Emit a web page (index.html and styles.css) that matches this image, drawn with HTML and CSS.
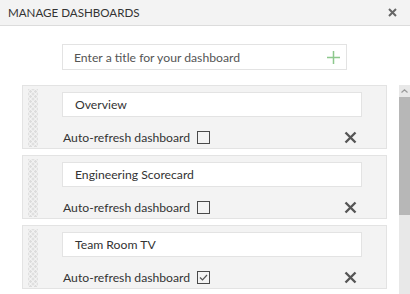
FILE: index.html
```html
<!DOCTYPE html>
<html lang="en">
<head>
  <meta charset="UTF-8" />
  <title>Manage dashboards</title>
  <link rel="stylesheet" href="styles.css">
</head>
<body>
  <div class="panel">
    <div class="header">
      <span class="title">MANAGE DASHBOARDS</span>
      <svg class="close" width="9" height="9" viewBox="0 0 9 9"><path d="M1 1L8 8M8 1L1 8" stroke="#666" stroke-width="2"/></svg>
    </div>
    <div class="new-row">
      <div class="new-box">
        <span class="placeholder">Enter a title for your dashboard</span>
        <svg width="13" height="13" viewBox="0 0 13 13"><path d="M6.5 0V13M0 6.5H13" stroke="#8dc88d" stroke-width="1.5"/></svg>
      </div>
    </div>
    <div class="list-area">
      <div class="list">
        <div class="card">
          <div class="grip"></div>
          <div class="card-body">
            <div class="name">Overview</div>
            <div class="opts">
              <span class="lbl">Auto-refresh dashboard</span>
              <span class="check"></span>
              <svg class="del" width="13" height="13" viewBox="0 0 13 13"><path d="M1.5 1.5L11.5 11.5M11.5 1.5L1.5 11.5" stroke="#555" stroke-width="2.4"/></svg>
            </div>
          </div>
        </div>
        <div class="card">
          <div class="grip"></div>
          <div class="card-body">
            <div class="name">Engineering Scorecard</div>
            <div class="opts">
              <span class="lbl">Auto-refresh dashboard</span>
              <span class="check"></span>
              <svg class="del" width="13" height="13" viewBox="0 0 13 13"><path d="M1.5 1.5L11.5 11.5M11.5 1.5L1.5 11.5" stroke="#555" stroke-width="2.4"/></svg>
            </div>
          </div>
        </div>
        <div class="card">
          <div class="grip"></div>
          <div class="card-body">
            <div class="name">Team Room TV</div>
            <div class="opts">
              <span class="lbl">Auto-refresh dashboard</span>
              <span class="check checked"><svg width="11" height="11" viewBox="0 0 11 11"><path d="M2 5.5L4.5 8L9 3" fill="none" stroke="#555" stroke-width="1.2"/></svg></span>
              <svg class="del" width="13" height="13" viewBox="0 0 13 13"><path d="M1.5 1.5L11.5 11.5M11.5 1.5L1.5 11.5" stroke="#555" stroke-width="2.4"/></svg>
            </div>
          </div>
        </div>
      </div>
      <div class="scrollbar">
        <div class="sb-up"><svg width="7" height="4" viewBox="0 0 7 4"><path d="M0.5 3.5L3.5 0.8L6.5 3.5" fill="none" stroke="#999" stroke-width="1.2"/></svg></div>
        <div class="sb-thumb"></div>
      </div>
    </div>
  </div>
</body>
</html>
```

FILE: styles.css
```css
body {
  margin: 0;
  font-family: 'Lato', 'Open Sans', sans-serif;
  color: #333;
  background: #fff;
}
.panel {
  width: 410px;
  height: 294px;
  overflow: hidden;
  display: flex;
  flex-direction: column;
}
.header {
  height: 26px;
  box-sizing: border-box;
  border-bottom: 1px solid #dcdcdc;
  background: #f3f3f3;
  display: flex;
  align-items: center;
  justify-content: space-between;
  padding: 0 13px 0 8px;
}
.title { font-size: 11.6px; color: #333; }
.new-row {
  padding: 18px 0 0 62px;
  margin-bottom: 15px;
}
.new-box {
  width: 285px; height: 26px;
  box-sizing: border-box;
  border: 1px solid #e3e3e3;
  display: flex; align-items: center; justify-content: space-between;
  padding: 0 6px 0 11px;
}
.placeholder { font-size: 12.2px; color: #555; }
.list-area {
  flex: 1;
  display: flex;
  padding-left: 22px;
}
.list {
  width: 365px;
  display: flex; flex-direction: column;
  gap: 6px;
}
.card {
  height: 64px; flex-shrink: 0;
  box-sizing: border-box;
  border: 1px solid #e3e3e3;
  background: #f3f3f3;
  display: flex;
}
.grip {
  width: 10px;
  margin: 3px 0 1px 5px;
  background-image:
    radial-gradient(circle, #dcdcdc 1.1px, transparent 1.5px),
    radial-gradient(circle, #dcdcdc 1.1px, transparent 1.5px);
  background-size: 5px 5px;
  background-position: 0 0, 2.5px 2.5px;
}
.card-body {
  margin-left: 24px;
  width: 300px;
  padding-top: 6px;
}
.name {
  height: 25px;
  box-sizing: border-box;
  background: #fff;
  border: 1px solid #e3e3e3;
  font-size: 12.2px;
  line-height: 23px;
  padding-left: 12px;
}
.opts {
  display: flex; align-items: center;
  margin-top: 13px;
  padding-left: 1px;
}
.lbl { font-size: 12.2px; }
.check {
  width: 13px; height: 13px;
  box-sizing: border-box;
  border: 1px solid #4a4a4a;
  margin-left: 7px;
  display: flex; align-items: center; justify-content: center;
}
.del { margin-left: auto; margin-right: 5px; }
.scrollbar {
  margin-left: 12px;
  width: 11px;
  background: #e8e8e8;
  display: flex; flex-direction: column;
}
.sb-up {
  height: 12px;
  display: flex; align-items: center; justify-content: center;
}
.sb-thumb {
  height: 118px;
  background: #b7b7b7;
}
```
